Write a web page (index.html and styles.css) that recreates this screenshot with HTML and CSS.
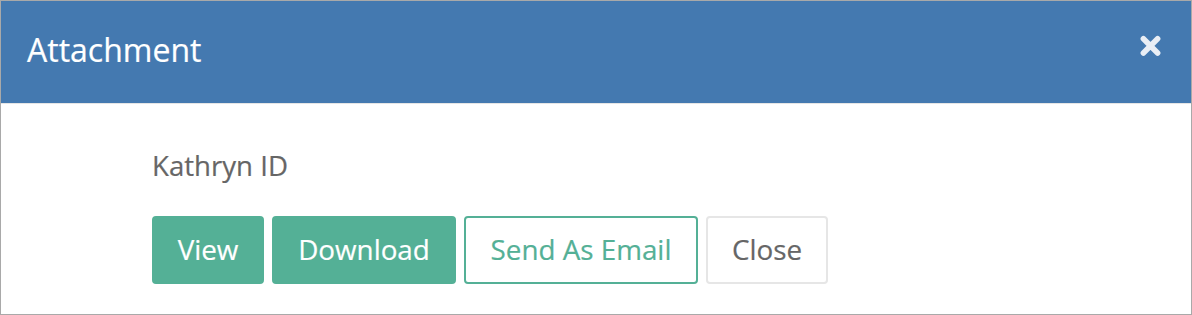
FILE: index.html
```html
<!DOCTYPE html>
<html>
<head>
<meta charset="utf-8">
<link rel="stylesheet" href="styles.css">
</head>
<body>
<div class="modal">
  <div class="modal-header">
    <h1 class="modal-title">Attachment</h1>
    <button class="close-x" aria-label="Close">
      <svg width="21" height="22" viewBox="0 0 21 22"><path d="M3.4 3.8 L17.6 18 M17.6 3.8 L3.4 18" stroke="#e9eef5" stroke-width="5.6" stroke-linecap="round"/></svg>
    </button>
  </div>
  <div class="modal-body">
    <div class="file-name">Kathryn ID</div>
    <div class="actions">
      <button class="btn btn-solid btn-view">View</button>
      <button class="btn btn-solid btn-download">Download</button>
      <button class="btn btn-outline btn-email">Send As Email</button>
      <button class="btn btn-default btn-close">Close</button>
    </div>
  </div>
</div>
</body>
</html>
```
FILE: styles.css
```css
html, body {
  margin: 0;
  padding: 0;
  background: #ffffff;
}
body {
  font-family: "Open Sans", "Liberation Sans", sans-serif;
}
.modal {
  width: 1192px;
  height: 315px;
  box-sizing: border-box;
  border: 1px solid #a9a9a9;
  display: flex;
  flex-direction: column;
  background: #fff;
}
.modal-header {
  height: 102px;
  background: #4479b0;
  border-bottom: 1px solid #e5e5e5;
  display: flex;
  align-items: center;
  justify-content: space-between;
  padding: 0 30px 0 26px;
  flex-shrink: 0;
}
.modal-title {
  margin: 0;
  color: #ffffff;
  font-size: 32px;
  font-weight: 400;
  line-height: 40px;
  margin-top: -4px;
  -webkit-text-stroke: 0.2px #ffffff;
}
.close-x {
  background: none;
  border: 0;
  padding: 0;
  width: 21px;
  height: 22px;
  display: flex;
  margin-top: -13px;
}
.modal-body {
  padding: 41px 0 0 151px;
}
.file-name {
  color: #666666;
  font-size: 27.6px;
  line-height: 40px;
  -webkit-text-stroke: 0.2px #666666;
}
.actions {
  display: flex;
  gap: 8px;
  margin-top: 31px;
}
.btn {
  font-family: "Open Sans", "Liberation Sans", sans-serif;
  font-size: 27.8px;
  height: 68px;
  box-sizing: border-box;
  border-radius: 4px;
  padding: 0;
  line-height: 1;
  display: flex;
  align-items: center;
  justify-content: center;
}
.btn-solid {
  background: #54b096;
  border: 2px solid #54b096;
  color: #ffffff;
  -webkit-text-stroke: 0.2px #ffffff;
}
.btn-view { width: 112px; }
.btn-download { width: 184px; }
.btn-outline {
  background: #fff;
  border: 2px solid #54b096;
  color: #54b096;
  width: 234px;
  -webkit-text-stroke: 0.2px #54b096;
}
.btn-default {
  background: #fff;
  border: 2px solid #e6e6e6;
  color: #666666;
  width: 122px;
  -webkit-text-stroke: 0.2px #666666;
}
```
